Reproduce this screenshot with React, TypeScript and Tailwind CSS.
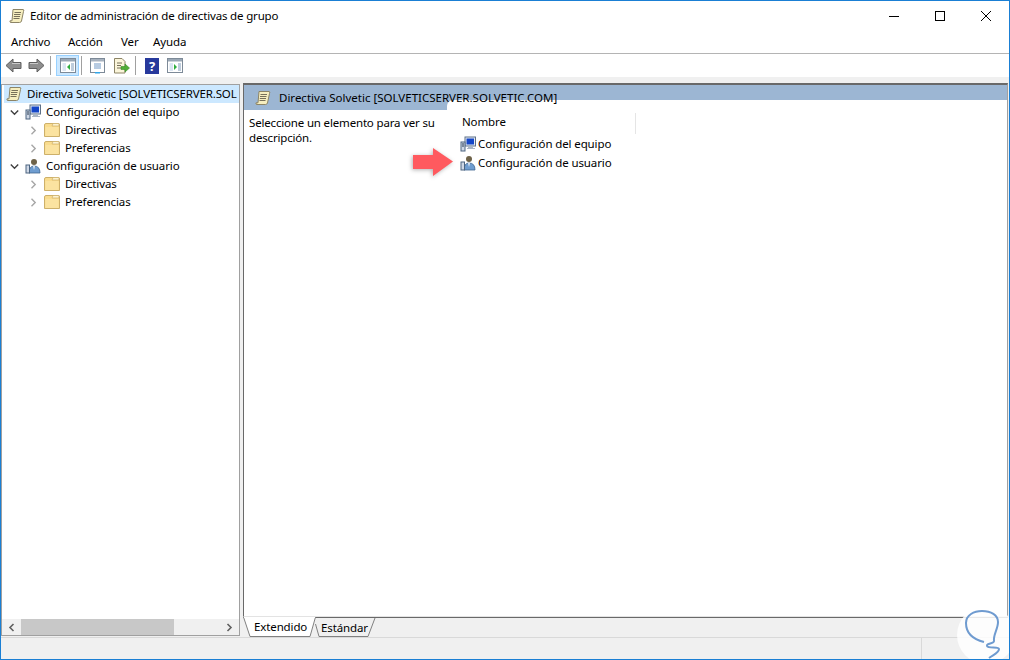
import React from 'react';

function ScrollIcon() {
  return (
    <svg width="16" height="16" viewBox="0 0 16 16" className="shrink-0">
      <path d="M4 1.5 H14 Q15.5 1.5 14.5 3.5 L12.5 13 Q12 14.5 10.5 14.5 H2 Q0.5 14.5 1 12.8 H3 Z" fill="#f6eebf" stroke="#8c8466" strokeWidth="1" />
      <path d="M5.5 4.5 H12 M5 6.5 H11.5 M4.8 8.5 H11 M4.5 10.5 H10.5" stroke="#77705a" strokeWidth="1" />
    </svg>
  );
}

function ComputerIcon() {
  return (
    <svg width="16" height="16" viewBox="0 0 16 16" className="shrink-0">
      <rect x="5" y="1" width="10.5" height="9" fill="#e4ebf5" stroke="#5d7087" />
      <rect x="6.5" y="2.5" width="7.5" height="6" fill="#1446c8" />
      <path d="M8 10 H13 V12 H15 V13 H7 V12 H8 Z" fill="#aab6c6" />
      <rect x="1" y="6" width="4" height="9" fill="#cfd8e6" stroke="#4c6480" />
      <path d="M2 8 H4 M2 10 H4" stroke="#27384f" />
    </svg>
  );
}

function UserIcon() {
  return (
    <svg width="16" height="16" viewBox="0 0 16 16" className="shrink-0">
      <circle cx="9" cy="4" r="3" fill="#6e6248" />
      <path d="M4 15 Q4 8 9 8 Q15 8 15 15 Z" fill="#6f9dd0" stroke="#3f658f" strokeWidth="0.8" />
      <path d="M8 8 L9 12 L10 8 Z" fill="#e8eef6" />
      <rect x="1" y="7" width="3.5" height="8" fill="#cfd8e6" stroke="#4c6480" />
    </svg>
  );
}

function FolderIcon() {
  return (
    <svg width="16" height="14" viewBox="0 0 16 14" className="shrink-0">
      <path d="M0.5 2 Q0.5 0.5 2 0.5 H14.5 Q15.5 0.5 15.5 2 V13.5 H0.5 Z" fill="#f9dc8e" stroke="#cdb06a" />
      <path d="M9 0.5 H15 V3 H8 Z" fill="#fdf3cf" stroke="#cdb06a" strokeWidth="0.7" />
      <rect x="1.5" y="4" width="13" height="9" fill="#fbe3a0" />
    </svg>
  );
}

function Chevron({ open }: { open?: boolean }) {
  return (
    <svg width="9" height="9" viewBox="0 0 9 9" fill="none" stroke={open ? '#404040' : '#a6a6a6'} strokeWidth="1.4">
      {open ? <path d="M0.8 2.5 L4.5 6.2 L8.2 2.5" /> : <path d="M2.5 0.8 L6.2 4.5 L2.5 8.2" />}
    </svg>
  );
}

function NavArrow({ flip }: { flip?: boolean }) {
  return (
    <svg width="17" height="15" viewBox="0 0 17 15" className={flip ? '-scale-x-100' : ''}>
      <path d="M8 1 L1 7.5 L8 14 V10.5 H16 V4.5 H8 Z" fill="#8e8e8e" stroke="#5f5f5f" />
      <path d="M7 5.5 H15" stroke="#c9c9c9" />
    </svg>
  );
}

function PaneIcon({ kind }: { kind: 'left' | 'right' }) {
  return (
    <svg width="16" height="15" viewBox="0 0 16 15">
      <rect x="0.5" y="0.5" width="15" height="14" fill="#fff" stroke="#7d8a98" />
      <rect x="1" y="1" width="14" height="2.5" fill="#9aa7b5" />
      <rect x="2.5" y="5" width="3.5" height="8" fill="#dbe6f2" />
      <path d="M11 6 H14 M11 8 H14 M11 10 H14 M11 12 H14" stroke="#7f9bba" />
      {kind === 'left' ? <path d="M10 6 L7 9 L10 12 Z" fill="#2fae3f" /> : <path d="M7 6 L10 9 L7 12 Z" fill="#2fae3f" />}
    </svg>
  );
}

function TreeRow({ indent, open, icon, label }: { indent: number; open?: boolean; icon: React.ReactNode; label: string }) {
  return (
    <div className="flex h-[18px] items-center" style={{ paddingLeft: indent }}>
      <span className="flex w-[15px] shrink-0 items-center">
        <Chevron open={open} />
      </span>
      <span className="flex w-[21px] shrink-0 items-center">{icon}</span>
      <span className="whitespace-nowrap">{label}</span>
    </div>
  );
}

export default function App() {
  return (
    <div className="relative h-[660px] w-[1010px] overflow-hidden border border-[#1a7fd4] bg-white text-[11.5px] leading-[16px] tracking-[-0.12px] text-black [font-family:'Noto_Sans',sans-serif]">
      {/* title bar */}
      <div className="flex h-[30px] items-center pl-[8px]">
        <ScrollIcon />
        <span className="ml-[5px] tracking-[-0.16px]">Editor de administración de directivas de grupo</span>
        <div className="ml-auto flex items-center pr-[18px]">
          <div className="mr-[36px] h-px w-[10px] bg-black" />
          <div className="mr-[36px] h-[10px] w-[10px] border border-black" />
          <svg width="10" height="10" viewBox="0 0 10 10" stroke="#000" strokeWidth="1">
            <path d="M0 0 L10 10 M10 0 L0 10" />
          </svg>
        </div>
      </div>

      {/* menu */}
      <div className="flex h-[23px] items-center border-b border-[#b4b4b4] pl-[10px]">
        <span className="w-[57px]">Archivo</span>
        <span className="w-[53px]">Acción</span>
        <span className="w-[32px]">Ver</span>
        <span>Ayuda</span>
      </div>

      {/* toolbar */}
      <div className="flex h-[23px] items-center pl-[4px]">
        <NavArrow />
        <span className="w-[6px]" />
        <NavArrow flip />
        <span className="ml-[5px] h-[19px] w-px bg-[#a0a0a0]" />
        <span className="ml-[5px] flex h-[21px] w-[23px] items-center justify-center border border-[#99d1ff] bg-[#cce8ff]">
          <PaneIcon kind="left" />
        </span>
        <span className="ml-[2px] h-[19px] w-px bg-[#a0a0a0]" />
        <span className="ml-[8px]">
          <svg width="16" height="16" viewBox="0 0 16 16">
            <rect x="0.5" y="0.5" width="14" height="14" fill="#fff" stroke="#7d8a98" />
            <rect x="1" y="1" width="13" height="2.5" fill="#a7b2bf" />
            <path d="M4 6 H11 M4 8 H11 M4 10 H11" stroke="#6f97c5" />
            <rect x="5" y="14" width="5" height="1.5" fill="#33a5e8" />
          </svg>
        </span>
        <span className="ml-[7px]">
          <svg width="17" height="16" viewBox="0 0 17 16">
            <path d="M1.5 0.5 H9 L12 3.5 V15 H1.5 Z" fill="#fbf5da" stroke="#8c8466" />
            <path d="M4 5 H9 M4 7.5 H8 M4 10 H8" stroke="#77705a" />
            <path d="M8 8.5 H12 V6 L16.5 10 L12 14 V11.5 H8 Z" fill="#4fae36" stroke="#3a8a28" strokeWidth="0.6" />
          </svg>
        </span>
        <span className="ml-[5px] h-[19px] w-px bg-[#a0a0a0]" />
        <span className="ml-[9px] flex h-[16px] w-[14px] items-center justify-center bg-[#27399c] text-[13px] font-bold text-white">?</span>
        <span className="ml-[8px]">
          <PaneIcon kind="right" />
        </span>
      </div>

      {/* main area */}
      <div className="flex h-[560px] bg-[#f0f0f0] pt-[6px]">
        {/* tree pane */}
        <div className="mt-px flex h-[552px] w-[239px] flex-col border border-[#a0a0a0] bg-white">
          <div className="flex-1 overflow-hidden pl-[2px]">
            <div className="flex h-[18px] items-center bg-[#cce8ff] pl-[2px]">
              <ScrollIcon />
              <span className="ml-[5px] whitespace-nowrap tracking-[-0.14px]">Directiva Solvetic [SOLVETICSERVER.SOL</span>
            </div>
            <TreeRow indent={6} open icon={<ComputerIcon />} label="Configuración del equipo" />
            <TreeRow indent={25} icon={<FolderIcon />} label="Directivas" />
            <TreeRow indent={25} icon={<FolderIcon />} label="Preferencias" />
            <TreeRow indent={6} open icon={<UserIcon />} label="Configuración de usuario" />
            <TreeRow indent={25} icon={<FolderIcon />} label="Directivas" />
            <TreeRow indent={25} icon={<FolderIcon />} label="Preferencias" />
          </div>
          <div className="flex h-[16px] items-center bg-[#f0f0f0]">
            <span className="flex w-[19px] justify-center">
              <svg width="7" height="9" viewBox="0 0 7 9" fill="none" stroke="#606060" strokeWidth="1.6"><path d="M5.5 1 L2 4.5 L5.5 8" /></svg>
            </span>
            <div className="h-full w-[153px] bg-[#c8c8c8]" />
            <span className="ml-auto flex w-[19px] justify-center">
              <svg width="7" height="9" viewBox="0 0 7 9" fill="none" stroke="#606060" strokeWidth="1.6"><path d="M1.5 1 L5 4.5 L1.5 8" /></svg>
            </span>
          </div>
        </div>

        {/* result pane */}
        <div className="ml-[3px] flex h-[554px] w-[765px] flex-col">
          <div className="flex flex-1 flex-col border-t-2 border-r border-b border-l border-t-[#696969] border-r-[#a0a0a0] border-b-[#e3e3e3] border-l-[#696969] bg-[#9cb6d3]">
            <div className="relative z-10 flex h-[15px] pl-[11px] pt-[5px]">
              <ScrollIcon />
              <span className="ml-[8px] whitespace-nowrap tracking-[0px]">Directiva Solvetic [SOLVETICSERVER.SOLVETIC.COM]</span>
            </div>
            <div className="flex flex-1">
              <div className="flex w-[203px] flex-col">
                <div className="h-[10px]" />
                <div className="flex-1 whitespace-nowrap bg-white pl-[5px] pt-[5px] leading-[15px] tracking-[-0.17px]">
                  Seleccione un elemento para ver su<br />descripción.
                </div>
              </div>
              <div className="flex-1 rounded-tl-[6px] bg-white">
                <div className="flex h-[34px] items-end">
                  <div className="flex h-[21px] w-[189px] items-end border-r border-[#e5e5e5] pb-[4px] pl-[15px]">Nombre</div>
                </div>
                <div className="flex h-[19px] items-center pl-[13px] pt-[1px]">
                  <ComputerIcon />
                  <span className="ml-[2px]">Configuración del equipo</span>
                </div>
                <div className="flex h-[19px] items-center pl-[13px] pt-[1px]">
                  <UserIcon />
                  <span className="ml-[2px]">Configuración de usuario</span>
                </div>
              </div>
            </div>
          </div>
          {/* tabs */}
          <div className="flex h-[20px] border-t border-[#696969] bg-[#f0f0f0]">
            <div className="relative z-10 -mt-px flex h-[20px] w-[69px] items-center pl-[11px]">
              <svg className="absolute left-0 top-0" width="73" height="20" viewBox="0 0 73 20">
                <path d="M0.5 0 L7 19.5 H67 L72.5 0 Z" fill="#fff" stroke="#808080" />
                <path d="M1 0.5 H72" stroke="#fff" />
              </svg>
              <span className="relative">Extendido</span>
            </div>
            <div className="relative z-20 flex h-[19px] w-[64px] items-center pl-[9px]">
              <svg className="absolute left-0 top-0" width="64" height="19" viewBox="0 0 64 19">
                <path d="M3.5 6 L7 18.5 H56 L63 0" fill="#f0f0f0" stroke="#808080" />
              </svg>
              <span className="relative">Estándar</span>
            </div>
          </div>
        </div>
      </div>

      {/* status bar */}
      <div className="flex h-[22px] border-t border-[#d9d9d9] bg-[#f0f0f0]">
        <div className="ml-[920px] h-full w-px bg-[#d9d9d9]" />
      </div>

      {/* red annotation arrow */}
      <svg className="absolute left-[411px] top-[146px] drop-shadow-[-1px_1px_2px_rgba(0,0,0,0.3)]" width="42" height="30" viewBox="0 0 42 30">
        <path d="M1 8 H21 V1 L41 14.5 L21 29 V22 H1 Z" fill="#ff5a5f" />
      </svg>

      {/* watermark logo */}
      <div className="absolute left-[956px] top-[605px] h-[58px] w-[58px] rounded-full bg-white/85" />
      <svg className="absolute left-[960px] top-[605px]" width="45" height="55" viewBox="960 605 45 55" fill="none" stroke="#6f9bd0" strokeWidth="2">
        <path d="M983 641 C975 639 965 634 965 622 C965 614 973 610 981 610 C990 610 997 614 997 621 C997 628 992 634 993 640 C993 643 985 642 986 645 C987 648 998 645 998 648 C998 652 992 654 988 657" />
      </svg>
    </div>
  );
}
